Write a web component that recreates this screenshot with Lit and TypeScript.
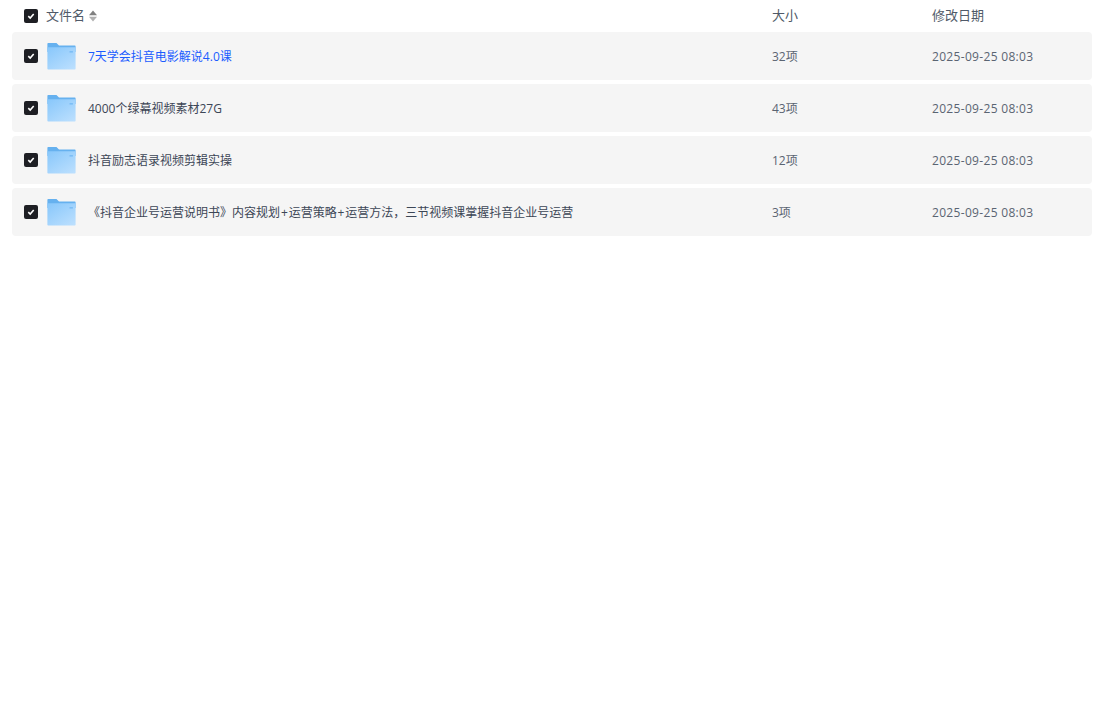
import { LitElement, html, css, svg } from "lit";
import { customElement } from "lit/decorators.js";

const rows = [
  { name: "7天学会抖音电影解说4.0课", size: "32项", link: true },
  { name: "4000个绿幕视频素材27G", size: "43项" },
  { name: "抖音励志语录视频剪辑实操", size: "12项" },
  { name: "《抖音企业号运营说明书》内容规划+运营策略+运营方法，三节视频课掌握抖音企业号运营", size: "3项" },
];

const folder = svg`<svg class="folder" width="30" height="28" viewBox="0 0 30 28">
  <defs><linearGradient id="fg" x1="0.1" y1="0" x2="0.9" y2="1"><stop offset="0" stop-color="#8ac8fb"/><stop offset="1" stop-color="#bbdffe"/></linearGradient></defs>
  <path d="M1.4 2C1.4 1.4 1.8 1 2.4 1H10.5L13 3.4H28.6C29.2 3.4 29.6 3.8 29.6 4.4V10H1.4Z" fill="#66b1ef"/>
  <path d="M1.4 5.2H29.6V26.4C29.6 27 29.2 27.4 28.6 27.4H2.4C1.8 27.4 1.4 27 1.4 26.4Z" fill="url(#fg)"/>
  <rect x="23.5" y="9" width="3.4" height="1.6" fill="#7dbef6"/>
</svg>`;

@customElement("app-root")
export class AppRoot extends LitElement {
  static styles = css`
    :host {
      display: block;
      width: 1102px;
      height: 727px;
      background: #fff;
      overflow: hidden;
      font-family: "Open Sans", "Noto Sans CJK SC", sans-serif;
      color: #505a68;
    }
    .table { padding: 0 10px 0 12px; display: flex; flex-direction: column; gap: 4px; }
    .head, .row {
      display: grid;
      grid-template-columns: 748px 160px 160px;
      padding-left: 12px;
      align-items: center;
    }
    .head { height: 32px; margin-bottom: -4px; font-size: 13px; }
    .hd { padding-bottom: 3px; }
    .row { height: 48px; background: #f5f5f5; border-radius: 4px; font-size: 12px; }
    .name { display: flex; align-items: center; min-width: 0; }
    .check {
      width: 14px; height: 14px; border-radius: 2px; background: #1e1f24;
      display: flex; align-items: center; justify-content: center; flex: none;
    }
    .title { margin-left: 8px; }
    .folder { margin-left: 8px; flex: none; display: block; }
    .text { margin-left: 12px; white-space: nowrap; color: #3c4656; }
    .text.link { color: #1a5cff; }
    .plus { margin: 0 0.9px; }
    .muted { color: #5a6472; }
    .date { letter-spacing: 0.32px; }
    .sort { margin-left: 4px; display: block; }
  `;

  private check() {
    return html`<span class="check"><svg width="10" height="10" viewBox="0 0 10 10"><path d="M2.3 5.2L4.2 7L7.7 3" fill="none" stroke="#fff" stroke-width="1.6"/></svg></span>`;
  }

  private label(name: string) {
    const parts = name.split("+");
    return parts.map((p, i) => (i === 0 ? p : html`<span class="plus">+</span>${p}`));
  }

  render() {
    return html`<div class="table">
      <div class="head">
        <div class="name">
          ${this.check()}
          <span class="title hd">文件名</span>
          <svg class="sort" width="8" height="12" viewBox="0 0 8 12"><path d="M4 .5L8 5.2H0Z" fill="#808080"/><path d="M4 11.5L8 6.8H0Z" fill="#b0b0b0"/></svg>
        </div>
        <div class="hd">大小</div>
        <div class="hd">修改日期</div>
      </div>
      ${rows.map(
        (r) => html`<div class="row">
          <div class="name">
            ${this.check()} ${folder}
            <span class="text ${r.link ? "link" : ""}">${this.label(r.name)}</span>
          </div>
          <div class="muted">${r.size}</div>
          <div class="muted date">2025-09-25 08:03</div>
        </div>`
      )}
    </div>`;
  }
}
